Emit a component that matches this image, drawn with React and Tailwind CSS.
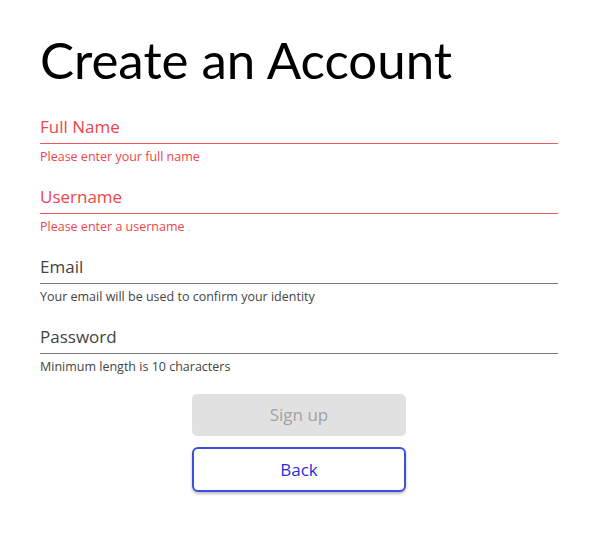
import React, { useState } from 'react';

function Field({ label, help, error }) {
  const [value, setValue] = useState('');
  return (
    <div className="mb-[20px]">
      <label
        className={`block border-b pb-[5px] text-[17px] leading-[23px] ${
          error ? 'border-[#f25a5f] text-[#f0454b]' : 'border-[#7a7a7a] text-[#444]'
        }`}
      >
        <span className="block">{label}</span>
        <input
          value={value}
          onChange={(e) => setValue(e.target.value)}
          className="sr-only"
          aria-label={label}
        />
      </label>
      <p className={`mt-[5px] text-[12.5px] leading-[16px] ${error ? 'text-[#f0454b]' : 'text-[#444]'}`}>
        {help}
      </p>
    </div>
  );
}

export default function App() {
  return (
    <div className="min-h-[539px] bg-white px-10 pt-[32px]" style={{ fontFamily: '"Open Sans", sans-serif' }}>
      <h1
        className="mb-[27px] text-[51px] leading-[56px] text-black"
        style={{ fontFamily: 'Lato, sans-serif' }}
      >
        Create an Account
      </h1>

      <div className="w-[518px]">
        <Field label="Full Name" help="Please enter your full name" error />
        <Field label="Username" help="Please enter a username" error />
        <Field label="Email" help="Your email will be used to confirm your identity" />
        <Field label="Password" help="Minimum length is 10 characters" />

        <div className="-mt-[1px] flex flex-col items-center gap-[11px]">
          <button
            disabled
            className="h-[42px] w-[214px] rounded-[5px] bg-[#e1e1e1] text-[17px] text-[#a3a3a3]"
          >
            Sign up
          </button>
          <button className="h-[45px] w-[214px] rounded-[6px] border-2 border-[#3c4fe0] bg-white text-[17px] text-[#1f2fd8] shadow-[0_2px_3px_rgba(0,0,0,0.25)]">
            Back
          </button>
        </div>
      </div>
    </div>
  );
}
